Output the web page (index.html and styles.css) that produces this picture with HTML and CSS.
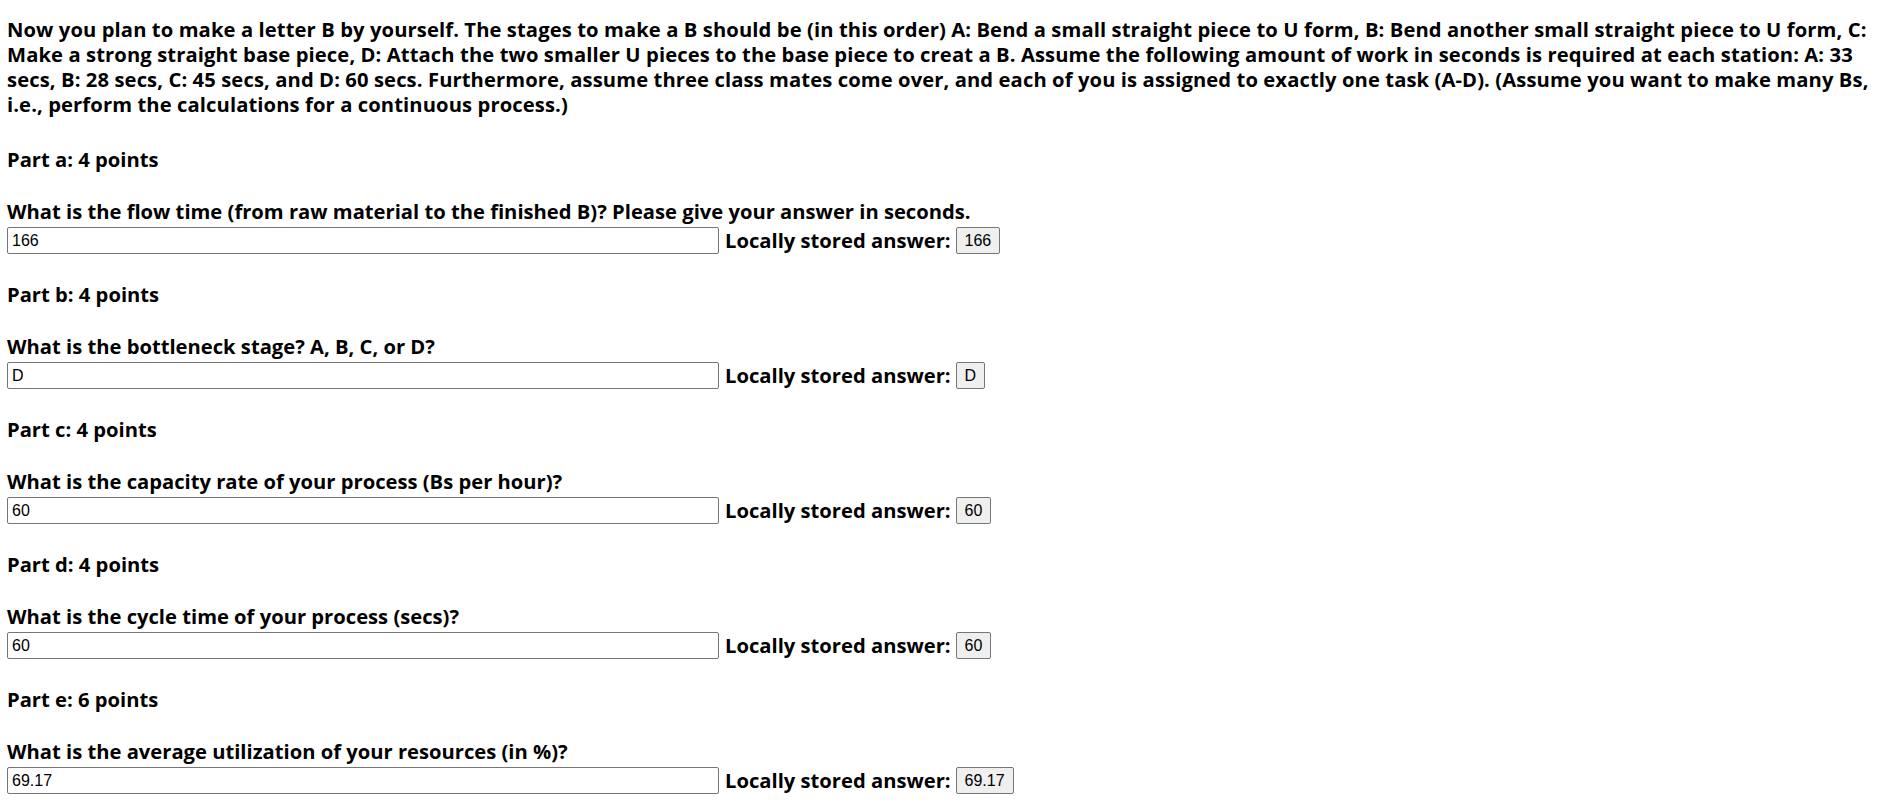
FILE: index.html
```html
<!DOCTYPE html>
<html>
<head>
<meta charset="utf-8">
<link rel="stylesheet" href="styles.css">
</head>
<body>
<div class="page">
  <p class="intro">Now you plan to make a letter B by yourself. The stages to make a B should be (in this order) A: Bend a small straight piece to U form, B: Bend another small straight piece to U form, C: Make a strong straight base piece, D: Attach the two smaller U pieces to the base piece to creat a B. Assume the following amount of work in seconds is required at each station: A: 33 secs, B: 28 secs, C: 45 secs, and D: 60 secs. Furthermore, assume three class mates come over, and each of you is assigned to exactly one task (A-D). (Assume you want to make many Bs, i.e., perform the calculations for a continuous process.)</p>

  <section class="part">
    <p class="part-title">Part a: 4 points</p>
    <p class="question">What is the flow time (from raw material to the finished B)? Please give your answer in seconds.</p>
    <div class="answer-row">
      <input class="answer-input" type="text" value="166">
      <span class="stored-label">Locally stored answer:</span>
      <button class="stored-btn">166</button>
    </div>
  </section>

  <section class="part">
    <p class="part-title">Part b: 4 points</p>
    <p class="question">What is the bottleneck stage? A, B, C, or D?</p>
    <div class="answer-row">
      <input class="answer-input" type="text" value="D">
      <span class="stored-label">Locally stored answer:</span>
      <button class="stored-btn">D</button>
    </div>
  </section>

  <section class="part">
    <p class="part-title">Part c: 4 points</p>
    <p class="question">What is the capacity rate of your process (Bs per hour)?</p>
    <div class="answer-row">
      <input class="answer-input" type="text" value="60">
      <span class="stored-label">Locally stored answer:</span>
      <button class="stored-btn">60</button>
    </div>
  </section>

  <section class="part">
    <p class="part-title">Part d: 4 points</p>
    <p class="question">What is the cycle time of your process (secs)?</p>
    <div class="answer-row">
      <input class="answer-input" type="text" value="60">
      <span class="stored-label">Locally stored answer:</span>
      <button class="stored-btn">60</button>
    </div>
  </section>

  <section class="part">
    <p class="part-title">Part e: 6 points</p>
    <p class="question">What is the average utilization of your resources (in %)?</p>
    <div class="answer-row">
      <input class="answer-input" type="text" value="69.17">
      <span class="stored-label">Locally stored answer:</span>
      <button class="stored-btn">69.17</button>
    </div>
  </section>
</div>
</body>
</html>
```

FILE: styles.css
```css
html, body {
  margin: 0;
  padding: 0;
  background: #ffffff;
}

.page {
  padding: 17px 8px 0 7px;
  font-family: "Open Sans", "Noto Sans", sans-serif;
  font-weight: 700;
  font-size: 20.2px;
  line-height: 25px;
  color: #000000;
}

p {
  margin: 0;
}

.intro {
  margin: 0;
  letter-spacing: 0.1px;
}

.part {
  display: flex;
  flex-direction: column;
}

.part-title {
  margin-top: 30px;
}

.part + .part .part-title {
  margin-top: 28px;
}

.question {
  margin-top: 27px;
}

.answer-row {
  display: flex;
  align-items: center;
  margin-top: 3px;
  height: 27px;
}

.answer-input {
  box-sizing: border-box;
  width: 712px;
  height: 27px;
  margin: 0;
  padding: 0 4px;
  border: 1px solid #767676;
  border-radius: 2px;
  font-family: "Liberation Sans", Arial, sans-serif;
  font-weight: 400;
  font-size: 16px;
  color: #000000;
  background: #ffffff;
}

.stored-label {
  margin-left: 6px;
}

.stored-btn {
  box-sizing: border-box;
  height: 27px;
  margin: 0 0 0 5px;
  padding: 0 8px;
  border: 1px solid #767676;
  border-radius: 2px;
  background: #efefef;
  font-family: "Liberation Sans", Arial, sans-serif;
  font-weight: 400;
  font-size: 16px;
  color: #000000;
}
```
